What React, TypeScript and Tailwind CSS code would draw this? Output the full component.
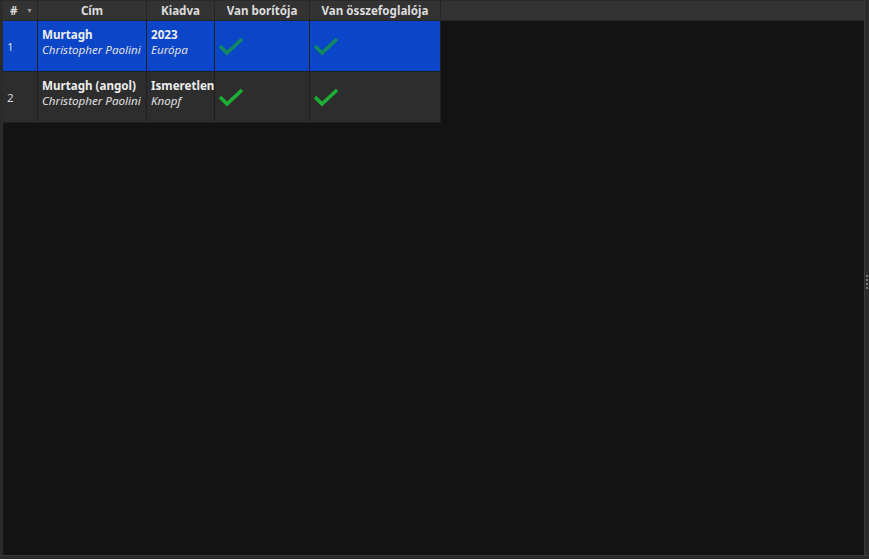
import React from "react";

const Check = ({ dark }: { dark?: boolean }) => (
  <svg width="26" height="20" viewBox="0 0 26 20">
    <path
      d="M2 10 L9 17 L24 3"
      fill="none"
      stroke={dark ? "#138a5e" : "#1cae35"}
      strokeWidth="3.6"
      strokeLinecap="butt"
      strokeLinejoin="miter"
    />
  </svg>
);

const rows = [
  { n: "1", title: "Murtagh", author: "Christopher Paolini", year: "2023", pub: "Európa", sel: true },
  { n: "2", title: "Murtagh (angol)", author: "Christopher Paolini", year: "Ismeretlen", pub: "Knopf", sel: false },
];

export default function App() {
  return (
    <div
      className="w-[869px] h-[559px] bg-[#2b2b2b] flex flex-col overflow-hidden"
      style={{ fontFamily: '"Noto Sans", "Open Sans", sans-serif' }}
    >
      <div className="flex flex-1 min-h-0">
        <div className="w-[3px] bg-[#2b2b2b]" />
        <div className="flex-1 flex flex-col min-w-0">
          <div className="h-[21px] bg-[#333333] border-t border-[#2a2a2a] border-b border-b-[#262626] flex text-[11.6px] font-bold text-[#dcdcdc] leading-[19px]">
            <div className="w-[35px] flex items-center justify-between pl-[7px] pr-[4px] border-r border-[#262626]">
              <span>#</span>
              <span className="text-[#9a9a9a] text-[7px]">▼</span>
            </div>
            <div className="w-[109px] text-center border-r border-[#262626]">Cím</div>
            <div className="w-[68px] text-center border-r border-[#262626]">Kiadva</div>
            <div className="w-[95px] text-center border-r border-[#262626]">Van borítója</div>
            <div className="w-[131px] text-center border-r border-[#262626]">Van összefoglalója</div>
            <div className="flex-1" />
          </div>
          <div className="flex-1 bg-[#131313]">
            {rows.map((r) => (
              <div
                key={r.n}
                className={`flex w-[438px] h-[51px] border-b border-[#1f1f1f] text-[11.6px] leading-[15px] ${
                  r.sel ? "bg-[#0b45c8]" : "bg-[#2d2d2d]"
                }`}
              >
                <div className="w-[35px] flex items-center pl-[4px] text-[#d8d8d8] border-r border-[#1f1f1f]">{r.n}</div>
                <div className="w-[109px] flex flex-col pt-[6px] pl-[4px] border-r border-[#1f1f1f] whitespace-nowrap overflow-hidden">
                  <span className="font-bold text-[#eeeeee]">{r.title}</span>
                  <span className="italic text-[#e0e0e0]">{r.author}</span>
                </div>
                <div className="w-[68px] flex flex-col pt-[6px] pl-[4px] border-r border-[#1f1f1f] whitespace-nowrap overflow-hidden">
                  <span className="font-bold text-[#eeeeee]">{r.year}</span>
                  <span className="italic text-[#e0e0e0]">{r.pub}</span>
                </div>
                <div className="w-[95px] flex items-center pl-[3px] border-r border-[#1f1f1f]">
                  <Check dark={r.sel} />
                </div>
                <div className="w-[131px] flex items-center pl-[3px] border-r border-[#1f1f1f]">
                  <Check dark={r.sel} />
                </div>
              </div>
            ))}
          </div>
        </div>
        <div className="w-[5px] border-l border-[#3a3a3a] bg-[#2b2b2b] flex flex-col justify-center items-center">
          <div className="flex flex-col gap-[2px] mt-[8px]">
            <div className="w-[2px] h-[2px] bg-[#777]" />
            <div className="w-[2px] h-[2px] bg-[#777]" />
            <div className="w-[2px] h-[2px] bg-[#777]" />
            <div className="w-[2px] h-[2px] bg-[#777]" />
          </div>
        </div>
      </div>
      <div className="h-[4px] bg-[#2b2b2b] border-t border-[#3a3a3a]" />
    </div>
  );
}
